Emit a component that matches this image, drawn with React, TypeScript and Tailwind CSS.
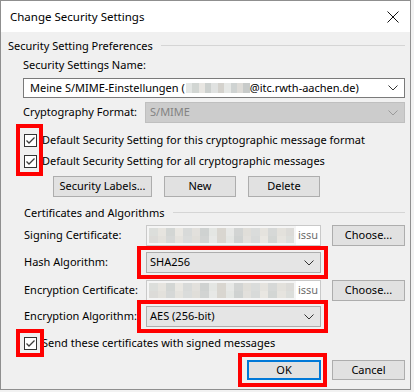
import React from "react";

const font = { fontFamily: '"Noto Sans", "Liberation Sans", sans-serif' };

function Chevron({ color = "#333" }: { color?: string }) {
  return (
    <svg width="10" height="6" viewBox="0 0 10 6" className="shrink-0">
      <path d="M0.5 0.5 L5 5 L9.5 0.5" fill="none" stroke={color} strokeWidth="1" />
    </svg>
  );
}

function Check() {
  return (
    <div className="w-[13px] h-[13px] border border-[#333333] bg-white flex items-center justify-center shrink-0">
      <svg width="11" height="11" viewBox="0 0 11 11">
        <path d="M1.5 5.5 L4 8 L9.5 2.5" fill="none" stroke="#3c3c3c" strokeWidth="1.3" />
      </svg>
    </div>
  );
}

function Btn({ children, w, primary }: { children: React.ReactNode; w: string; primary?: boolean }) {
  return (
    <div
      className={`${w} h-full flex items-center justify-center bg-[#e1e1e1] text-[#000] whitespace-nowrap ${
        primary ? "border-2 border-[#0078d7]" : "border border-[#adadad]"
      }`}
    >
      {children}
    </div>
  );
}

function Blur() {
  const shades = ["#dcdedb", "#e6e4df", "#d3d6d4", "#e9e7e2", "#d8dad9", "#e2e0dc", "#cfd2d1", "#e4e6e3", "#d9d6d0", "#e7e8e6", "#d2d4d3", "#e0ded9", "#dadcdb", "#e5e3de", "#d6d8d7", "#e3e1dc", "#dcdbd8"];
  return (
    <div className="flex-1 h-full flex flex-col bg-[#e8eef5]">
      <div className="flex h-1/2">
        {shades.map((c, i) => (
          <div key={i} className="flex-1" style={{ backgroundColor: c }} />
        ))}
      </div>
      <div className="flex h-1/2">
        {shades
          .slice()
          .reverse()
          .map((c, i) => (
            <div key={i} className="flex-1" style={{ backgroundColor: c }} />
          ))}
      </div>
    </div>
  );
}

function CertField() {
  return (
    <div className="w-[175px] h-full border border-[#c9c9c9] bg-[#f5f5f5] flex items-stretch shrink-0">
      <div className="flex-1 p-[2px] flex">
        <Blur />
      </div>
      <div className="w-[24px] flex items-center justify-center text-[#6d6d6d] bg-white">issu</div>
    </div>
  );
}

function Combo({ value }: { value: string }) {
  return (
    <div className="w-[175px] h-full border border-[#adadad] bg-[#e5e5e5] flex items-center pl-[3px] pr-[6px] justify-between shrink-0">
      <span>{value}</span>
      <Chevron />
    </div>
  );
}

export default function App() {
  return (
    <div className="w-[414px] h-[392px] bg-[#f2f2f2] text-[11px] text-black whitespace-nowrap" style={font}>
      <div className="relative w-[411px] h-[390px] border border-[#8f8f8f] bg-[#f0f0f0] flex flex-col">
        {/* title bar */}
        <div className="h-[31px] bg-white flex items-center justify-between pl-[9px] pr-[11px] shrink-0">
          <span className="text-[11.5px] text-black">Change Security Settings</span>
          <svg width="12" height="12" viewBox="0 0 12 12">
            <path d="M0.5 0.5 L11.5 11.5 M11.5 0.5 L0.5 11.5" stroke="#111" strokeWidth="1" />
          </svg>
        </div>

        <div className="flex flex-col pl-[7px] pr-[5px]">
          {/* header 1 */}
          <div className="mt-[6px] h-[16px] flex items-center">
            <span>Security Setting Preferences</span>
            <div className="flex-1 ml-[8px] h-px bg-[#d5d5d5] mt-[-2px]" />
          </div>

          <div className="pl-[15px] flex flex-col">
            <div className="mt-[3px] h-[16px] flex items-center">Security Settings Name:</div>
            <div className="mt-[5px] h-[20px] border border-[#7a7a7a] bg-white flex items-center pl-[6px] pr-[6px] justify-between">
              <div className="flex items-center">
                <span>Meine S/MIME-Einstellungen (</span>
                <div className="w-[64px] h-[10px] flex ml-[1px]">
                  {["#e3e6e4", "#d2d6d3", "#e8e6e2", "#cdd1cf", "#e0e2e1", "#d4d2cd", "#e6e8e6", "#cfd3d2", "#dedcd8", "#c8cbca"].map((c, i) => (
                    <div key={i} className="flex-1" style={{ backgroundColor: c }} />
                  ))}
                </div>
                <span>@itc.rwth-aachen.de)</span>
              </div>
              <Chevron />
            </div>

            <div className="mt-[4px] h-[21px] flex items-center">
              <div className="w-[122px] shrink-0">Cryptography Format:</div>
              <div className="flex-1 h-full border border-[#bfbfbf] bg-[#cccccc] flex items-center justify-between pl-[4px] pr-[6px] text-[#838383]">
                <span>S/MIME</span>
                <Chevron color="#9a9a9a" />
              </div>
            </div>
          </div>

          {/* checkboxes */}
          <div className="mt-[9px] h-[16px] flex items-center pl-[16px] gap-[5px]">
            <Check />
            <span>Default Security Setting for this cryptographic message format</span>
          </div>
          <div className="mt-[5px] h-[16px] flex items-center pl-[16px] gap-[5px]">
            <Check />
            <span>Default Security Setting for all cryptographic messages</span>
          </div>

          <div className="mt-[7px] h-[21px] flex pl-[45px] gap-[12px]">
            <Btn w="w-[99px]">Security Labels...</Btn>
            <Btn w="w-[72px]">New</Btn>
            <Btn w="w-[72px]">Delete</Btn>
          </div>

          {/* header 2 */}
          <div className="mt-[8px] h-[16px] flex items-center pl-[16px]">
            <span>Certificates and Algorithms</span>
            <div className="flex-1 ml-[9px] h-px bg-[#d5d5d5] mt-[-2px]" />
          </div>

          <div className="pl-[16px] flex flex-col">
            <div className="mt-[4px] h-[21px] flex items-center">
              <div className="w-[122px] shrink-0">Signing Certificate:</div>
              <CertField />
              <div className="ml-[11px] h-full flex">
                <Btn w="w-[73px]">Choose...</Btn>
              </div>
            </div>
            <div className="mt-[6px] h-[21px] flex items-center">
              <div className="w-[122px] shrink-0">Hash Algorithm:</div>
              <Combo value="SHA256" />
            </div>
            <div className="mt-[7px] h-[21px] flex items-center">
              <div className="w-[122px] shrink-0">Encryption Certificate:</div>
              <CertField />
              <div className="ml-[11px] h-full flex">
                <Btn w="w-[73px]">Choose...</Btn>
              </div>
            </div>
            <div className="mt-[5px] h-[21px] flex items-center">
              <div className="w-[122px] shrink-0">Encryption Algorithm:</div>
              <Combo value="AES (256-bit)" />
            </div>
          </div>

          <div className="mt-[8px] h-[16px] flex items-center pl-[16px] gap-[5px]">
            <Check />
            <span>Send these certificates with signed messages</span>
          </div>

          <div className="mt-[9px] h-[20px] flex justify-end gap-[11px]">
            <Btn w="w-[74px]" primary>
              OK
            </Btn>
            <Btn w="w-[73px]">Cancel</Btn>
          </div>
        </div>

        {/* red annotation overlays */}
        <div className="absolute left-[15px] top-[123px] w-[27px] h-[52px] border-4 border-[#ff0000]" />
        <div className="absolute left-[136px] top-[245px] w-[191px] h-[33px] border-4 border-[#ff0000]" />
        <div className="absolute left-[136px] top-[299px] w-[191px] h-[33px] border-4 border-[#ff0000]" />
        <div className="absolute left-[15px] top-[328px] w-[28px] h-[28px] border-4 border-[#ff0000]" />
        <div className="absolute left-[237px] top-[352px] w-[89px] h-[34px] border-4 border-[#ff0000]" />
      </div>
    </div>
  );
}
